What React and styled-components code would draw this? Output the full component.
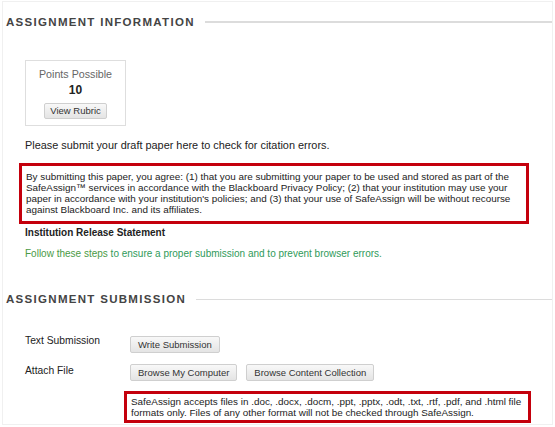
import React from "react";
import styled, { createGlobalStyle } from "styled-components";

const Global = createGlobalStyle`
  html, body { margin: 0; padding: 0; background: #fff; }
  body { font-family: "Liberation Sans", Arial, sans-serif; color: #222; }
`;

const Page = styled.div`
  width: 551px;
  height: 424px;
  margin: 1px 0 0 2px;
  border: 1px solid #f0f0f0;
  box-sizing: border-box;
  overflow: hidden;
`;

const SectionHead = styled.div`
  display: flex;
  align-items: center;
  gap: 10px;
  padding-left: 3px;
  margin-top: ${(p) => p.$top}px;
`;

const HeadText = styled.h2`
  margin: 0;
  font-size: 11.5px;
  font-weight: bold;
  letter-spacing: 1.3px;
  color: #444;
  line-height: 16px;
  white-space: nowrap;
`;

const HeadLine = styled.div`
  flex: 1;
  height: 0;
  border-top: ${(p) => p.$thick}px solid #dcdcdc;
`;

const Body = styled.div`
  padding-left: 22px;
`;

const PointsBox = styled.div`
  width: 101px;
  height: 66px;
  box-sizing: border-box;
  border: 1px solid #dedede;
  margin-top: 30px;
  display: flex;
  flex-direction: column;
  align-items: center;
  padding-top: 6px;
`;

const PointsLabel = styled.div`
  font-size: 10.7px;
  color: #666;
  line-height: 14px;
`;

const PointsValue = styled.div`
  font-size: 12px;
  font-weight: bold;
  color: #222;
  line-height: 16px;
  margin-top: 1px;
`;

const Button = styled.button`
  font-family: "Liberation Sans", Arial, sans-serif;
  font-size: ${(p) => p.$fs || 9.5}px;
  color: #333;
  height: ${(p) => p.$h || 17}px;
  padding: 0 ${(p) => p.$px || 7}px;
  border: 1px solid #cfcfcf;
  border-radius: 2px;
  background: linear-gradient(#f8f8f8, #e4e4e4);
  margin-top: ${(p) => p.$mt || 0}px;
  line-height: 1;
  cursor: pointer;
`;

const Para = styled.p`
  margin: ${(p) => p.$mt}px 0 0 0;
  font-size: 10.9px;
  line-height: 14px;
  color: #222;
`;

const Notice = styled.div`
  border: 3px solid #c4000c;
  box-sizing: border-box;
  font-size: 9.9px;
  line-height: 11px;
  color: #222;
  padding: ${(p) => p.$pad};
  width: ${(p) => p.$w}px;
  margin: ${(p) => p.$m};
  white-space: nowrap;
`;

const SubHead = styled.div`
  font-size: 10px;
  font-weight: bold;
  color: #222;
  margin-top: 3px;
  line-height: 12px;
`;

const GreenLine = styled.p`
  margin: 9px 0 0 0;
  font-size: 10px;
  line-height: 12px;
  color: #2f9a5a;
`;

const GreenLink = styled.span`
  color: #4a9a45;
`;

const FormGrid = styled.div`
  display: grid;
  grid-template-columns: 105px 1fr;
  align-items: start;
  row-gap: 11px;
  margin-top: 27px;
`;

const FieldLabel = styled.div`
  font-size: 10.3px;
  color: #222;
  line-height: 12px;
  margin-top: 1px;
`;

const ButtonRow = styled.div`
  display: flex;
  gap: 9px;
`;

export default function App() {
  return (
    <>
      <Global />
      <Page>
        <SectionHead $top={12}>
          <HeadText>ASSIGNMENT INFORMATION</HeadText>
          <HeadLine $thick={2} />
        </SectionHead>
        <Body>
          <PointsBox>
            <PointsLabel>Points Possible</PointsLabel>
            <PointsValue>10</PointsValue>
            <Button $h={16} $px={5} $mt={5}>View Rubric</Button>
          </PointsBox>
          <Para $mt={12}>Please submit your draft paper here to check for citation errors.</Para>
        </Body>
        <Notice $w={510} $m="11px 0 0 16px" $pad="5px 4px 6px 4px">
          By submitting this paper, you agree: (1) that you are submitting your paper to be used and stored as part of the
          <br />
          SafeAssign™ services in accordance with the Blackboard Privacy Policy; (2) that your institution may use your
          <br />
          paper in accordance with your institution's policies; and (3) that your use of SafeAssign will be without recourse
          <br />
          against Blackboard Inc. and its affiliates.
        </Notice>
        <Body>
          <SubHead>Institution Release Statement</SubHead>
          <GreenLine>
            <GreenLink>Follow these steps</GreenLink> to ensure a proper submission and to prevent browser errors.
          </GreenLine>
        </Body>
        <SectionHead $top={31}>
          <HeadText>ASSIGNMENT SUBMISSION</HeadText>
          <HeadLine $thick={1} />
        </SectionHead>
        <Body>
          <FormGrid>
            <FieldLabel>Text Submission</FieldLabel>
            <div>
              <Button>Write Submission</Button>
            </div>
            <FieldLabel>Attach File</FieldLabel>
            <ButtonRow>
              <Button>Browse My Computer</Button>
              <Button>Browse Content Collection</Button>
            </ButtonRow>
          </FormGrid>
        </Body>
        <Notice $w={407} $m="10px 0 0 121px" $pad="2px 4px 2px 4px">
          SafeAssign accepts files in .doc, .docx, .docm, .ppt, .pptx, .odt, .txt, .rtf, .pdf, and .html file
          <br />
          formats only. Files of any other format will not be checked through SafeAssign.
        </Notice>
      </Page>
    </>
  );
}
